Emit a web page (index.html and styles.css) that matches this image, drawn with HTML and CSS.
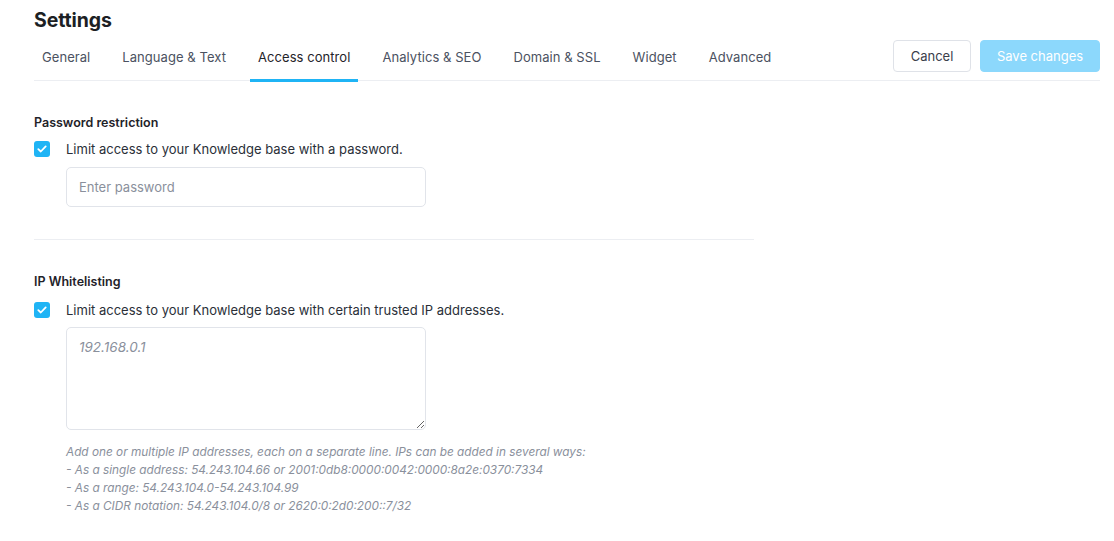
FILE: index.html
```html
<!DOCTYPE html>
<html lang="en">
<head>
<meta charset="utf-8">
<title>Settings</title>
<link rel="stylesheet" href="styles.css">
</head>
<body>
<div class="page">
  <h1 class="title">Settings</h1>
  <div class="tabbar">
    <nav class="tabs">
      <a class="tab">General</a>
      <a class="tab">Language &amp; Text</a>
      <a class="tab active">Access control</a>
      <a class="tab">Analytics &amp; SEO</a>
      <a class="tab">Domain &amp; SSL</a>
      <a class="tab">Widget</a>
      <a class="tab">Advanced</a>
    </nav>
    <div class="actions">
      <button class="btn btn-cancel">Cancel</button>
      <button class="btn btn-save">Save changes</button>
    </div>
  </div>

  <section class="section first">
    <h2 class="section-title">Password restriction</h2>
    <label class="check-row">
      <span class="checkbox"><svg width="10" height="8" viewBox="0 0 10 8"><path d="M1.3 4.2 3.8 6.5 8.7 1.4" fill="none" stroke="#fff" stroke-width="1.8" stroke-linecap="round" stroke-linejoin="round"/></svg></span>
      <span class="check-label">Limit access to your Knowledge base with a password.</span>
    </label>
    <div class="field">
      <input class="input" type="text" placeholder="Enter password">
    </div>
  </section>

  <hr class="divider">

  <section class="section ip">
    <h2 class="section-title">IP Whitelisting</h2>
    <label class="check-row">
      <span class="checkbox"><svg width="10" height="8" viewBox="0 0 10 8"><path d="M1.3 4.2 3.8 6.5 8.7 1.4" fill="none" stroke="#fff" stroke-width="1.8" stroke-linecap="round" stroke-linejoin="round"/></svg></span>
      <span class="check-label">Limit access to your Knowledge base with certain trusted IP addresses.</span>
    </label>
    <div class="field">
      <textarea class="textarea" placeholder="192.168.0.1"></textarea>
      <p class="help">Add one or multiple IP addresses, each on a separate line. IPs can be added in several ways:<br>- As a single address: 54.243.104.66 or 2001:0db8:0000:0042:0000:8a2e:0370:7334<br>- As a range: 54.243.104.0-54.243.104.99<br>- As a CIDR notation: 54.243.104.0/8 or 2620:0:2d0:200::7/32</p>
    </div>
  </section>
</div>
</body>
</html>
```
FILE: styles.css
```css
* { box-sizing: border-box; }
html, body { margin: 0; padding: 0; background: #fff; }
body {
  font-family: Inter, "Noto Sans", "Liberation Sans", sans-serif;
  color: #1f2329;
}
.page {
  padding: 8px 14px 0 34px;
}
.title {
  margin: 0;
  font-size: 19.5px;
  line-height: 24px;
  font-weight: 700;
  color: #1c1f24;
  letter-spacing: -0.1px;
}
.tabbar {
  display: flex;
  justify-content: space-between;
  align-items: flex-end;
  border-bottom: 1px solid #eceef2;
  margin-top: 8px;
}
.tabs {
  display: flex;
  gap: 16px;
}
.tab {
  display: block;
  padding: 0 8px;
  font-size: 13px;
  line-height: 16px;
  letter-spacing: 0.06px;
  height: 41px;
  padding-top: 8px;
  color: #4b5261;
  border-bottom: 3px solid transparent;
  margin-bottom: -2px;
  cursor: pointer;
  white-space: nowrap;
}
.tab.active {
  color: #1f2329;
  border-bottom-color: #1fb4f5;
}
.actions {
  display: flex;
  gap: 9px;
  padding-bottom: 8px;
}
.btn {
  font-family: inherit;
  font-size: 13px;
  height: 32px;
  border-radius: 4px;
  padding: 0;
  cursor: pointer;
  white-space: nowrap;
  text-align: center;
}
.btn-cancel {
  width: 78px;
  background: #fff;
  border: 1px solid #dfe2e8;
  color: #3a404b;
}
.btn-save {
  width: 120px;
  background: #8cd8fc;
  border: 1px solid #8cd8fc;
  color: #fff;
}
.section.first { margin-top: 34px; }
.section { width: 720px; }
.section-title {
  margin: 0;
  font-size: 12.5px;
  line-height: 16px;
  font-weight: 600;
  color: #1f2329;
}
.check-row {
  display: flex;
  align-items: center;
  gap: 16px;
  margin-top: 9px;
}
.section.ip .check-row { margin-top: 11px; }
.checkbox {
  width: 16px;
  height: 16px;
  border-radius: 3px;
  background: #1fb4f5;
  display: flex;
  align-items: center;
  justify-content: center;
  flex: none;
}
.check-label {
  font-size: 13px;
  line-height: 18px;
  color: #2a2f38;
}
.field {
  padding-left: 32px;
  margin-top: 9px;
}
.section.ip .field { margin-top: 8px; }
.input, .textarea {
  display: block;
  width: 360px;
  border: 1px solid #e1e4ea;
  border-radius: 5px;
  font-family: inherit;
  font-size: 13px;
  color: #1f2329;
  outline: none;
  background: #fff;
}
.input {
  height: 40px;
  padding: 0 12px;
}
.textarea {
  height: 103px;
  padding: 11px 12px 10px;
  resize: vertical;
  font-size: 13.5px;
}
.input::placeholder { color: #8a909c; }
.textarea::placeholder { color: #8a909c; font-style: italic; }
.divider {
  width: 720px;
  margin: 32px 0 34px 0;
  border: 0;
  border-top: 1px solid #eceef2;
}
.help {
  margin: 13px 0 0;
  font-size: 11.8px;
  line-height: 18px;
  font-style: italic;
  color: #8a909c;
}
```
